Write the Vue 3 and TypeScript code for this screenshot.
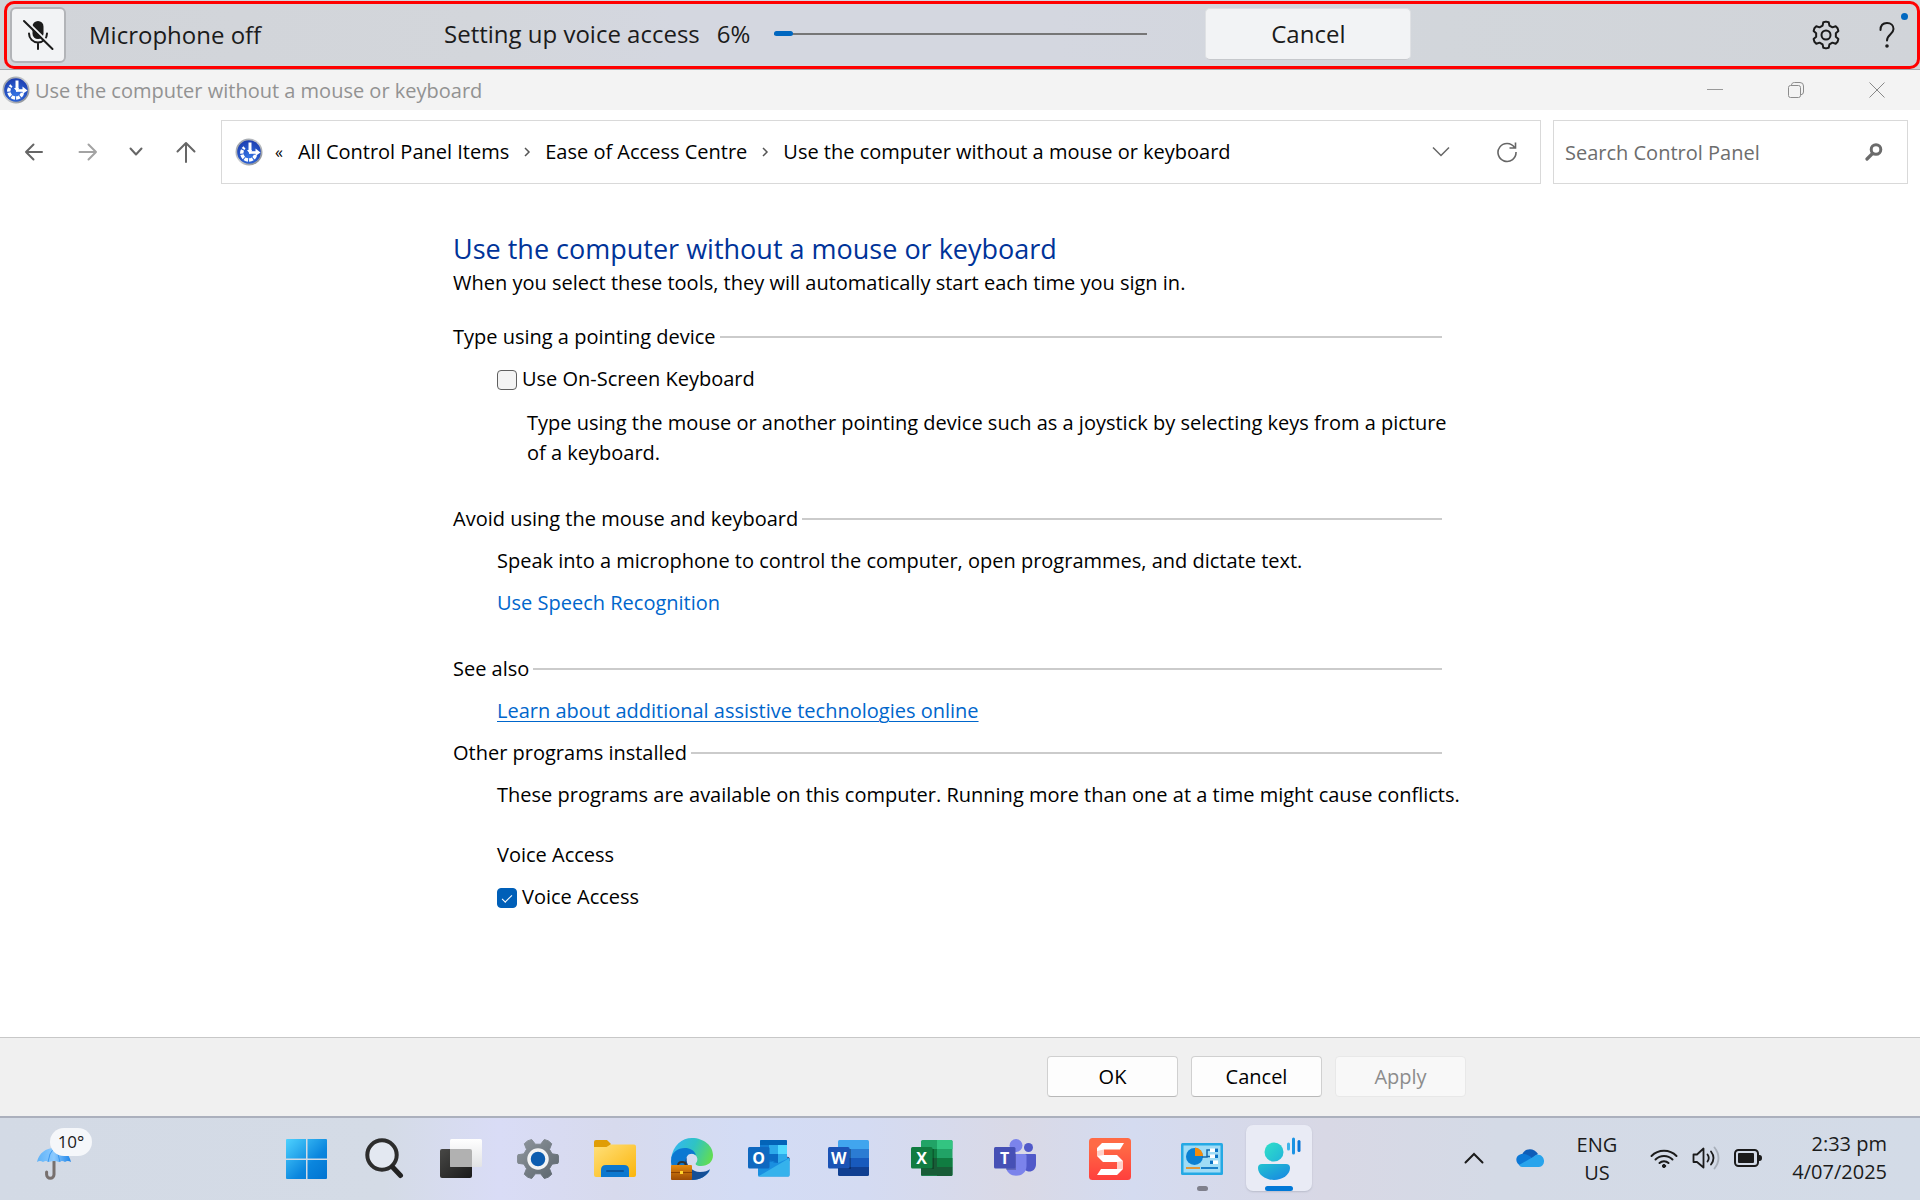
<script setup lang="ts">
import { ref } from 'vue'

const progress = ref<number>(6)
const onScreenKeyboard = ref<boolean>(false)
const voiceAccess = ref<boolean>(true)
const search = ref<string>('')

const crumbs: string[] = [
  'All Control Panel Items',
  'Ease of Access Centre',
  'Use the computer without a mouse or keyboard',
]

// Outline of a cog centred on (c, c); turn is the angle of the first tooth in degrees.
function cog(c: number, outer: number, inner: number, turn: number, half: number): string {
  const points: string[] = []
  for (let i = 0; i < 6; i++) {
    const steps: [number, number][] = [
      [-half - 8, inner],
      [-half, outer],
      [0, outer + 0.4],
      [half, outer],
      [half + 8, inner],
    ]
    for (const [offset, radius] of steps) {
      const a = ((turn + i * 60 + offset) * Math.PI) / 180
      points.push(`${(c + radius * Math.cos(a)).toFixed(2)} ${(c + radius * Math.sin(a)).toFixed(2)}`)
    }
  }
  return `M${points.join('L')}Z`
}

const outlineCog = cog(15, 13, 10, 30, 12)
const solidCog = cog(21, 20.5, 15, 0, 12)
</script>

<template>
  <div class="desktop">
    <header class="voice-bar">
      <div class="voice-frame">
        <div class="mic">
          <button class="mic-button" type="button" aria-label="Turn microphone on">
            <svg width="32" height="32" viewBox="0 0 32 32" fill="none">
              <rect x="10.500" y="2" width="11" height="18" rx="5.500" fill="#1b1b1b" />
              <path d="M7 14.500a9 9 0 0 0 18 0M16 24v6" stroke="#1b1b1b" stroke-width="2" stroke-linecap="round" />
              <path d="M3.500 1L32 29" stroke="#f2f3f5" stroke-width="2" />
              <path d="M2 2l28.500 28" stroke="#1b1b1b" stroke-width="2" stroke-linecap="round" />
            </svg>
          </button>
          <span>Microphone off</span>
        </div>
        <div class="setup">
          <span>Setting up voice access</span>
          <span>{{ progress }}%</span>
          <div class="track" role="progressbar" :aria-valuenow="progress" aria-valuemin="0" aria-valuemax="100">
            <div class="fill" :style="{ width: progress - 1 + '%' }"></div>
          </div>
          <button class="voice-cancel" type="button">Cancel</button>
        </div>
        <div class="voice-tools">
          <button class="bare" type="button" aria-label="Settings">
            <svg width="30" height="30" viewBox="0 0 30 30" fill="none" stroke="#1b1b1b" stroke-width="2" stroke-linejoin="round">
              <path :d="outlineCog" />
              <circle cx="15" cy="15" r="4.500" />
            </svg>
          </button>
          <button class="bare help" type="button" aria-label="Help">
            <svg width="18" height="28" viewBox="0 0 18 28" fill="none" stroke="#1b1b1b" stroke-width="2" stroke-linecap="round">
              <path d="M2.500 9C2.500 4.500 5 2 9 2s6.500 2.500 6.500 6c0 5-6.500 5.500-6.500 11.500" />
              <circle cx="9" cy="25" r="0.800" fill="#1b1b1b" />
            </svg>
            <span class="dot"></span>
          </button>
        </div>
      </div>
    </header>

    <svg class="defs" width="0" height="0" aria-hidden="true">
      <defs>
        <linearGradient id="rim" x1="0" y1="0" x2="1" y2="1">
          <stop offset="0" stop-color="#8d9299" /><stop offset="0.500" stop-color="#c9ccd0" /><stop offset="1" stop-color="#777c84" />
        </linearGradient>
        <radialGradient id="orb" cx="0.500" cy="0.700" r="0.700">
          <stop offset="0" stop-color="#3474e4" /><stop offset="1" stop-color="#1c3db0" />
        </radialGradient>
        <symbol id="ease" viewBox="0 0 28 28">
          <circle cx="14" cy="14" r="13.500" fill="url(#rim)" />
          <circle cx="14" cy="14" r="11.800" fill="url(#orb)" />
          <path d="M20.500 17a7 7 0 1 1-11-7.500" fill="none" stroke="#fff" stroke-width="3.400" stroke-dasharray="3.800 1" />
          <path d="M15 4.500v9" fill="none" stroke="#fff" stroke-width="3" />
          <path d="M14 14.500h8" fill="none" stroke="#fff" stroke-width="2.600" />
          <path d="M20.500 10.500l5 4-5 3.500zM12 12h5l-2 4z" fill="#fff" />
        </symbol>
      </defs>
    </svg>

    <div class="title-bar">
      <svg width="28" height="28"><use href="#ease" /></svg>
      <span class="title">Use the computer without a mouse or keyboard</span>
      <div class="window-buttons">
        <button class="bare" type="button" aria-label="Minimise">
          <svg width="16" height="16" viewBox="0 0 16 16" stroke="#999"><path d="M0 7.500h16" /></svg>
        </button>
        <button class="bare" type="button" aria-label="Restore">
          <svg width="16" height="16" viewBox="0 0 16 16" fill="none" stroke="#8c8c8c">
            <rect x="0.500" y="3.500" width="12" height="12" rx="2" /><path d="M3.500 3.500C3.500 1.500 4.500 0.500 6.500 0.500H12q3.500 0 3.500 3.500v6q0 2.500-3 3" />
          </svg>
        </button>
        <button class="bare" type="button" aria-label="Close">
          <svg width="16" height="16" viewBox="0 0 16 16" stroke="#888"><path d="M0.500 0.500l15 15M15.500 0.500l-15 15" /></svg>
        </button>
      </div>
    </div>

    <div class="nav-bar">
      <div class="nav-arrows">
        <button class="bare" type="button" aria-label="Back">
          <svg width="20" height="20" viewBox="0 0 20 20" fill="none" stroke="#666" stroke-width="2" stroke-linecap="round" stroke-linejoin="round"><path d="M18 10H2M9.500 2.500L2 10l7.500 7.500" /></svg>
        </button>
        <button class="bare" type="button" aria-label="Forward">
          <svg width="20" height="20" viewBox="0 0 20 20" fill="none" stroke="#a3a3a3" stroke-width="2" stroke-linecap="round" stroke-linejoin="round"><path d="M1.500 10H18M10.500 2.500L18 10l-7.500 7.500" /></svg>
        </button>
        <button class="bare recent" type="button" aria-label="Recent locations">
          <svg width="14" height="10" viewBox="0 0 14 10" fill="none" stroke="#666" stroke-width="2" stroke-linecap="round" stroke-linejoin="round"><path d="M1.500 1.500L7 7.500l5.500-6" /></svg>
        </button>
        <button class="bare" type="button" aria-label="Up">
          <svg width="20" height="22" viewBox="0 0 20 22" fill="none" stroke="#666" stroke-width="2" stroke-linecap="round" stroke-linejoin="round"><path d="M10 21V2M1.500 10.500L10 2l8.500 8.500" /></svg>
        </button>
      </div>
      <div class="address">
        <svg width="28" height="28"><use href="#ease" /></svg>
        <span class="overflow">«</span>
        <nav class="crumbs" aria-label="Location">
          <template v-for="(crumb, i) in crumbs" :key="crumb">
            <svg v-if="i > 0" width="8" height="10" viewBox="0 0 8 10" fill="none" stroke="#555" stroke-width="1.500"><path d="M2 1l4 4-4 4" /></svg>
            <a href="#">{{ crumb }}</a>
          </template>
        </nav>
        <button class="bare" type="button" aria-label="Previous locations">
          <svg width="18" height="12" viewBox="0 0 18 12" fill="none" stroke="#666" stroke-width="1.500"><path d="M1 1.500l8 8 8-8" /></svg>
        </button>
        <button class="bare refresh" type="button" aria-label="Refresh">
          <svg width="22" height="22" viewBox="0 0 22 22" fill="none" stroke="#666" stroke-width="1.600"><path d="M18.500 6.500A9 9 0 1 0 20 11M19.500 1.500v5.500h-6" /></svg>
        </button>
      </div>
      <label class="search">
        <input v-model="search" type="text" placeholder="Search Control Panel" aria-label="Search Control Panel" />
        <svg width="18" height="18" viewBox="0 0 18 18" fill="none" stroke="#6b6b6b"><circle cx="11" cy="6.500" r="4.800" stroke-width="3" /><path d="M7.500 10.500L2 16" stroke-width="3.200" stroke-linecap="round" /></svg>
      </label>
    </div>

    <main class="page">
      <div class="column">
        <h1>Use the computer without a mouse or keyboard</h1>
        <p class="intro">When you select these tools, they will automatically start each time you sign in.</p>

        <section>
          <h2>Type using a pointing device</h2>
          <label class="check"><input v-model="onScreenKeyboard" type="checkbox" />Use On-Screen Keyboard</label>
          <p class="hint">Type using the mouse or another pointing device such as a joystick by selecting keys from a picture of a keyboard.</p>
        </section>

        <section>
          <h2>Avoid using the mouse and keyboard</h2>
          <p>Speak into a microphone to control the computer, open programmes, and dictate text.</p>
          <p><a class="link" href="#">Use Speech Recognition</a></p>
        </section>

        <section class="tight">
          <h2>See also</h2>
          <p><a class="link underlined" href="#">Learn about additional assistive technologies online</a></p>
        </section>

        <section>
          <h2>Other programs installed</h2>
          <p>These programs are available on this computer. Running more than one at a time might cause conflicts.</p>
          <p class="program">Voice Access</p>
          <label class="check"><input v-model="voiceAccess" type="checkbox" />Voice Access</label>
        </section>
      </div>
    </main>

    <div class="actions">
      <div class="column">
        <button type="button">OK</button>
        <button type="button">Cancel</button>
        <button type="button" disabled>Apply</button>
      </div>
    </div>

    <footer class="taskbar">
      <button class="bare weather" type="button" aria-label="Weather, 10 degrees">
        <svg width="36" height="32" viewBox="0 0 36 32" fill="none">
          <defs>
            <linearGradient id="umb" x1="0" x2="1"><stop offset="0" stop-color="#5eb2f7" /><stop offset="0.500" stop-color="#8ccaff" /><stop offset="1" stop-color="#1c84e8" /></linearGradient>
          </defs>
          <path d="M18 11v15.500a3.700 3.700 0 0 1-7.400 0V24" stroke="#77706e" stroke-width="3" stroke-linecap="round" />
          <path d="M1 14C3 5 10 0 18 0s15 5 17 14q-3.500-2-6 0-3-2-6 0-5-2-10 0-3-2-6 0-3-2-6 0z" fill="url(#umb)" />
          <path d="M12 14Q13 5 18 0q5 5 6 14" stroke="#3b97ee" />
        </svg>
        <span class="temp">10°</span>
      </button>

      <nav class="apps" aria-label="Taskbar apps">
        <button class="bare slot" type="button" aria-label="Start">
          <svg width="42" height="42" viewBox="0 0 42 42">
            <defs><linearGradient id="win" gradientUnits="userSpaceOnUse" x1="0" y1="0" x2="42" y2="42"><stop offset="0" stop-color="#4fd3ff" /><stop offset="0.600" stop-color="#0a86de" /><stop offset="1" stop-color="#0072d0" /></linearGradient></defs>
            <path d="M1 1h19v19.500H0V2q0-1 1-1zM21.500 1H40q1 0 1 1v18.500H21.500zM0 22h20v19H1q-1 0-1-1zM21.500 22H41v18q0 1-1 1H21.500z" fill="url(#win)" />
          </svg>
        </button>
        <button class="bare slot" type="button" aria-label="Search">
          <svg width="40" height="42" viewBox="0 0 40 42" fill="none"><circle cx="18" cy="17" r="14.700" fill="#e3e8f1" stroke="#2d2d2d" stroke-width="4" /><path d="M28.500 29l8 8.500" stroke="#222" stroke-width="5" stroke-linecap="round" /></svg>
        </button>
        <button class="bare slot" type="button" aria-label="Task view">
          <svg width="42" height="42" viewBox="0 0 42 42">
            <defs><linearGradient id="tvd" x1="0" y1="0" x2="1" y2="1"><stop offset="0" stop-color="#484846" /><stop offset="1" stop-color="#1a1a1a" /></linearGradient><linearGradient id="tvl" x1="0" y1="0" x2="0" y2="1"><stop offset="0" stop-color="#fff" /><stop offset="1" stop-color="#e2e3e5" /></linearGradient></defs>
            <rect x="0" y="11" width="32" height="29" rx="2" fill="url(#tvd)" />
            <rect x="10" y="1" width="32" height="28" rx="1.500" fill="url(#tvl)" />
            <path d="M10 11h20q2 0 2 2v16H11.500q-1.500 0-1.500-1.500z" fill="#b1b1b1" />
          </svg>
        </button>
        <button class="bare slot" type="button" aria-label="Settings">
          <svg width="42" height="42" viewBox="0 0 42 42">
            <defs><linearGradient id="cogfill" x1="0" y1="0" x2="1" y2="1"><stop offset="0" stop-color="#90979e" /><stop offset="1" stop-color="#5a646c" /></linearGradient></defs>
            <path :d="solidCog" fill="url(#cogfill)" stroke="url(#cogfill)" stroke-linejoin="round" />
            <circle cx="21" cy="21" r="9" fill="#0c5db0" stroke="#f2f3f4" stroke-width="3.500" />
          </svg>
        </button>
        <button class="bare slot" type="button" aria-label="File Explorer">
          <svg width="42" height="42" viewBox="0 0 42 42">
            <defs><linearGradient id="fold" x1="0" y1="0" x2="1" y2="1"><stop offset="0" stop-color="#ffe07a" /><stop offset="1" stop-color="#fbb50b" /></linearGradient></defs>
            <path d="M0 4q0-2 2-2h11l4 4-3 4H0z" fill="#e09d04" />
            <path d="M0 9h12.500l4-2.500H40q2 0 2 2V37q0 2-2 2H2q-2 0-2-2z" fill="url(#fold)" />
            <path d="M7 39v-7q0-5 5-5h18q5 0 5 5v7z" fill="#0c78cf" />
            <path d="M13 33h16" stroke="#0a559c" stroke-width="2" stroke-linecap="round" />
          </svg>
        </button>
        <button class="bare slot" type="button" aria-label="Microsoft Edge">
          <svg width="44" height="44" viewBox="0 0 44 44">
            <defs>
              <linearGradient id="edge1" x1="0" y1="0.300" x2="1" y2="0.600"><stop offset="0" stop-color="#35b6f2" /><stop offset="0.500" stop-color="#2fc3c4" /><stop offset="1" stop-color="#62dd52" /></linearGradient>
              <linearGradient id="case" x1="0" y1="0" x2="0" y2="1"><stop offset="0" stop-color="#e58a10" /><stop offset="1" stop-color="#9c4b05" /></linearGradient>
            </defs>
            <path d="M1 22C3 8 12 1 22 1c12 0 21 8 21 17 0 7-5 11-12 11-5 0-6-2-5-3 2-2 2-6-1-8C17 13 5 15 1 22z" fill="url(#edge1)" />
            <path d="M1 24C1 15 8 11 15 11c5 0 9 2 11 7-6-3-10 0-10 6 0 8 6 12 14 12 5 0 8-2 10-3-3 6-10 10-18 10C10 43 1 35 1 24z" fill="#0b78d2" />
            <path d="M17 20c-2 8 5 15 13 15 5 0 8-1 10-3-3 7-10 11-18 11-9-3-10-15-5-23z" fill="#154f96" />
            <path d="M8 29q0-4 4-4t4 4" fill="none" stroke="#333" stroke-width="2" />
            <rect x="1" y="28" width="21" height="15" rx="1" fill="url(#case)" />
            <path d="M1 35.500h21" stroke="#8c4000" /><rect x="10" y="34" width="3" height="3" fill="#ffd52e" />
          </svg>
        </button>
        <button class="bare slot" type="button" aria-label="Outlook">
          <svg width="42" height="42" viewBox="0 0 42 42">
            <rect x="12" y="2" width="27" height="24" rx="1.500" fill="#0f7bd4" /><path d="M12 7V3q0-1 1-1h25q1 0 1 1v4z" fill="#0364b8" />
            <path d="M39.500 18.500l2 1.500v3l-3 1z" fill="#0a2767" />
            <path d="M10 20h31.500v17q0 1.500-1.500 1.500H12q-2 0-2-1.500z" fill="#1a8fe0" /><path d="M12 7h9v13l5 5h4l9-5V16h-9v8H21" fill="#117bd2" />
            <path d="M21 16h9v9l-9-3z" fill="#0b6cc4" /><path d="M30 16h9v5l-9 4zM21 7h9v9h-9z" fill="#2caaea" /><path d="M30 7h9v9h-9z" fill="#50d9ff" />
            <path d="M41.500 20L10 38.500h30q1.500 0 1.500-1.500z" fill="#35b2ec" />
            <rect x="0" y="9" width="21.500" height="21.500" rx="1.500" fill="#0f68c0" /><text x="10.700" y="25.500" class="glyph">O</text>
          </svg>
        </button>
        <button class="bare slot office" type="button" aria-label="Word">
          <svg width="42" height="42" viewBox="0 0 42 42">
            <path d="M10 11V3.500Q10 2 11.500 2h28Q41 2 41 3.500V11z" fill="#41a5ee" /><path d="M10 11h31v9H10z" fill="#2b7cd3" /><path d="M10 20h31v9H10z" fill="#185abd" /><path d="M10 29h31v7.500q0 1.500-1.500 1.500h-28Q10 38 10 36.500z" fill="#103f91" />
            <path d="M21 11h2v20H10v-2h11z" opacity="0.250" /><rect x="0" y="9" width="21.500" height="21.500" rx="1.500" fill="#1b53b5" /><text x="10.700" y="25.500" class="glyph">W</text>
          </svg>
        </button>
        <button class="bare slot office" type="button" aria-label="Excel">
          <svg width="42" height="42" viewBox="0 0 42 42">
            <rect x="10" y="2" width="31.500" height="36" rx="1.500" fill="#21a366" /><path d="M26 2h14q1.500 0 1.500 1.500V11H26z" fill="#33c481" /><path d="M10 20h16v-9h-6v9zM26 20h15.500v9H26z" fill="#107c41" /><path d="M10 20h16v17.500H11.500Q10 38 10 36.500zM26 29h15.500v7.500q0 1.500-1.500 1.500H26z" fill="#185c37" />
            <path d="M21 11h2v20H10v-2h11z" opacity="0.250" /><rect x="0" y="9" width="21.500" height="21.500" rx="1.500" fill="#107c41" /><text x="10.700" y="25.500" class="glyph">X</text>
          </svg>
        </button>
        <button class="bare slot office" type="button" aria-label="Teams">
          <svg width="42" height="42" viewBox="0 0 42 42">
            <circle cx="34.500" cy="9.500" r="4.500" fill="#5059c9" /><path d="M28 16h13q1 0 1 1v9c0 10-13 10-14 0z" fill="#5059c9" /><circle cx="22" cy="7.500" r="6.500" fill="#7b83eb" /><path d="M12 16h19q1.500 0 1.500 1.500V28c0 13-20.500 13-20.500 0z" fill="#7b83eb" />
            <path d="M12 16h10v16H12z" opacity="0.200" /><rect x="0" y="9" width="21.500" height="21.500" rx="1.500" fill="#4650b5" /><text x="10.700" y="25.500" class="glyph">T</text>
          </svg>
        </button>
        <button class="bare slot snag" type="button" aria-label="Snagit">
          <svg width="42" height="42" viewBox="0 0 42 42">
            <defs><linearGradient id="sna" x1="0" y1="0" x2="0" y2="1"><stop offset="0.200" stop-color="#ff6a45" /><stop offset="1" stop-color="#ff3f3d" /></linearGradient></defs>
            <rect width="42" height="42" rx="3.500" fill="url(#sna)" />
            <path d="M13 5h22l-4 6.500H15V17h13l6 6v8l-6 6H8l4-6h16v-7H14l-6-6v-8z" fill="#fff" /><path d="M8 13l7-1.500V17l-7 1zM28 24l6-1v8h-6z" fill="#ffd0c8" />
          </svg>
        </button>
        <button class="bare slot" type="button" aria-label="Control Panel">
          <svg width="42" height="34" viewBox="0 0 42 34">
            <rect x="0" y="1" width="42" height="32" rx="1.500" fill="#25a9e4" /><rect x="2.500" y="3.500" width="37" height="27" fill="#9fdcf6" />
            <circle cx="13.500" cy="14.500" r="8.500" fill="#0b80d3" /><path d="M14 14V5.500a8.500 8.500 0 0 1 8 8.500z" fill="#f58b0a" />
            <path d="M21 15h5V8h4M26 14.500h4" fill="none" stroke="#1468ac" stroke-width="1.500" />
            <path d="M29 6.500h8v3.500h-8zM29 12.500h8V16h-8zM29 18.500h8V22h-8z" fill="#fff" /><path d="M34 6.500h3v3.500h-3zM34 12.500h3V16h-3zM29 18.500h3V22h-3z" fill="#0b73c4" />
            <path d="M5 26h14" stroke="#e0983a" stroke-width="2" /><path d="M20 26h17" stroke="#1b80c8" stroke-width="2" />
          </svg>
          <span class="running"></span>
        </button>
        <button class="bare slot active" type="button" aria-label="Voice access">
          <svg width="44" height="44" viewBox="0 0 44 44">
            <defs><linearGradient id="va1" x1="0" y1="0" x2="1" y2="1"><stop offset="0" stop-color="#30e0c8" /><stop offset="1" stop-color="#20b4da" /></linearGradient><linearGradient id="va2" x1="0" y1="0" x2="1" y2="1"><stop offset="0" stop-color="#22c3d0" /><stop offset="1" stop-color="#1784e3" /></linearGradient></defs>
            <circle cx="17" cy="16" r="9.500" fill="url(#va1)" /><path d="M5 28h24q4 0 4 4c0 7-8 12-16 12S1 39 1 32q0-4 4-4z" fill="url(#va2)" />
            <path d="M31.500 8v5" stroke="#3fb3ea" stroke-width="3" stroke-linecap="round" /><path d="M36.500 3v14" stroke="#1a93e4" stroke-width="3" stroke-linecap="round" /><path d="M42 5.500v9" stroke="#0b76d6" stroke-width="3" stroke-linecap="round" />
          </svg>
          <span class="running current"></span>
        </button>
      </nav>

      <div class="tray">
        <button class="bare" type="button" aria-label="Show hidden icons">
          <svg width="20" height="12" viewBox="0 0 20 12" fill="none" stroke="#1b1b1b" stroke-width="2" stroke-linecap="round"><path d="M1.500 10.500L10 2l8.500 8.500" /></svg>
        </button>
        <button class="bare cloud" type="button" aria-label="OneDrive">
          <svg width="28" height="20" viewBox="0 0 28 20"><path d="M6 7C8 0 18-1 22 6l-8 6z" fill="#0f5db8" /><path d="M5 18C-2 15-1 6 7 6c3 0 5 1 8 3l4 9z" fill="#0d78d6" /><path d="M3 17L17 9q2-2 4-2.500c9 0 9 12 2 12.500H6q-2 0-3-2z" fill="#28a4ec" /></svg>
        </button>
        <button class="bare lang" type="button"><span>ENG</span><span>US</span></button>
        <button class="bare status" type="button" aria-label="Network, volume and battery">
          <svg width="28" height="22" viewBox="0 0 28 22" fill="none" stroke="#1b1b1b" stroke-width="2" stroke-linecap="round"><path d="M1.500 9a17.500 17.500 0 0 1 25 0M5.500 12.500a12 12 0 0 1 17 0M9.500 16a6.500 6.500 0 0 1 9 0" /><circle cx="14" cy="19" r="1.600" fill="#1b1b1b" stroke-width="1" /></svg>
          <svg width="28" height="24" viewBox="0 0 28 24" fill="none" stroke="#1b1b1b" stroke-width="1.800" stroke-linecap="round" stroke-linejoin="round"><path d="M1.500 8.500H5L11.500 2.500v19L5 16H1.500zM15.500 8.500q2.500 3.500 0 7M19 5.500q5 6.500 0 13" /><path d="M22.500 1.500q8 10.500 0 21" stroke="#a8afb9" /></svg>
          <svg width="28" height="20" viewBox="0 0 28 20" fill="none"><rect x="1" y="2" width="23" height="16" rx="3.500" stroke="#1b1b1b" stroke-width="2" /><rect x="4" y="5" width="16" height="10" rx="1" fill="#1b1b1b" /><path d="M24 7h1.500q2.500 0 2.500 3t-2.500 3H24z" fill="#1b1b1b" /></svg>
        </button>
        <button class="bare clock" type="button"><span>2:33 pm</span><span>4/07/2025</span></button>
      </div>
    </footer>
  </div>
</template>

<style>
body {
  background: #fff;
}
</style>

<style scoped>
.desktop {
  display: flex;
  flex-direction: column;
  min-height: 100vh;
  font-family: "Open Sans", "Noto Sans", sans-serif;
  font-size: 20px;
  line-height: 30px;
  color: #000;
}
button,
input {
  font: inherit;
  color: inherit;
}
svg {
  display: block;
  flex: none;
}
a {
  color: inherit;
  text-decoration: none;
}
h1,
h2,
p {
  margin: 0;
  font-weight: 400;
}
.defs {
  position: absolute;
}
.bare {
  display: flex;
  align-items: center;
  justify-content: center;
  padding: 0;
  border: 0;
  background: none;
}

.voice-bar {
  box-sizing: border-box;
  height: 70px;
  padding: 1px 0 0 4px;
  border-bottom: 1px solid #a9abb0;
  background: linear-gradient(90deg, #d1d4d9, #d3d6db 25%, #d4d7e0 35%, #d4d7e0 55%, #d2d6db 75%, #d1d4d9);
}
.voice-frame {
  box-sizing: border-box;
  display: flex;
  align-items: center;
  height: 68px;
  padding: 0 3px;
  border: 3px solid #f00;
  border-radius: 10px;
  font-size: 24px;
  color: #1b1b1b;
}
.mic {
  display: flex;
  flex: 0 0 434px;
  align-items: center;
  gap: 23px;
}
.mic-button {
  box-sizing: border-box;
  display: flex;
  align-items: center;
  justify-content: center;
  width: 56px;
  height: 56px;
  padding: 0;
  border: 2px solid #b2b4b8;
  border-radius: 6px;
  background: #f2f3f5;
}
.setup {
  display: flex;
  align-items: center;
  gap: 17px;
  padding-bottom: 2px;
}
.track {
  width: 373px;
  height: 2px;
  margin-left: 7px;
  background: #767676;
}
.fill {
  height: 5px;
  margin-top: -2px;
  border-radius: 3px;
  background: #0067c0;
}
.voice-cancel {
  width: 206px;
  height: 52px;
  margin-left: 41px;
  padding: 0;
  border: 1px solid #dfe1e4;
  border-bottom-color: #c6c8cc;
  border-radius: 5px;
  background: #f2f3f5;
}
.voice-tools {
  display: flex;
  flex: 1;
  justify-content: flex-end;
  align-self: stretch;
}
.voice-tools .bare {
  position: relative;
  width: 68px;
}
.voice-tools .help {
  width: 54px;
}
.dot {
  position: absolute;
  top: 9px;
  right: 6px;
  width: 7px;
  height: 7px;
  border-radius: 50%;
  background: #0067c0;
}

.title-bar {
  display: flex;
  align-items: center;
  gap: 5px;
  height: 40px;
  padding: 0 3px 0 2px;
  background: #f3f3f3;
}
.title {
  flex: 1;
  padding-top: 2px;
  color: #929292;
}
.window-buttons {
  display: flex;
  align-self: stretch;
}
.window-buttons .bare {
  width: 81px;
}

.nav-bar {
  display: flex;
  gap: 12px;
  padding: 10px 12px 0 24px;
}
.nav-arrows {
  display: flex;
  align-items: center;
  gap: 34px;
  width: 185px;
}
.recent {
  margin: 0 -1px 0 -3px;
}
.address,
.search {
  box-sizing: border-box;
  display: flex;
  align-items: center;
  height: 64px;
  border: 1px solid #d9d9d9;
}
.address {
  flex: 1;
  padding: 0 22px 0 13px;
}
.overflow {
  margin: 0 15px 0 12px;
  font-size: 16px;
}
.crumbs {
  display: flex;
  flex: 1;
  align-items: center;
  gap: 14px;
}
.refresh {
  margin-left: 46px;
}
.search {
  width: 355px;
  padding: 0 24px 0 11px;
}
.search input {
  flex: 1;
  min-width: 0;
  padding: 2px 0 0;
  border: 0;
  outline: 0;
  background: none;
}
.search input::placeholder {
  color: #6d6d6d;
  opacity: 1;
}

.page {
  flex: 1;
  padding: 46px 0 40px;
}
.column {
  box-sizing: border-box;
  max-width: 1014px;
  margin: 0 auto;
}
h1 {
  font-size: 27px;
  line-height: 38px;
  color: #003399;
}
.intro {
  margin: 0 0 24px;
}
section {
  display: flex;
  flex-direction: column;
  align-items: flex-start;
  gap: 12px;
  margin-bottom: 36px;
  padding-left: 44px;
}
section.tight {
  margin-bottom: 12px;
}
h2 {
  display: flex;
  align-items: center;
  align-self: stretch;
  gap: 4px;
  margin: 0 25px 0 -44px;
  font-size: 20px;
}
h2::after {
  content: "";
  flex: 1;
  height: 2px;
  background: #cbcbcb;
}
.check {
  display: flex;
  align-items: center;
  gap: 5px;
}
.check input {
  appearance: none;
  box-sizing: border-box;
  width: 20px;
  height: 20px;
  margin: 2px 0 0;
  border: 1px solid #5f5f5f;
  border-radius: 4px;
  background: #f3f3f3;
}
.check input:checked {
  display: grid;
  place-items: center;
  border-color: #005fb8;
  background: #005fb8;
}
.check input:checked::after {
  content: "";
  box-sizing: border-box;
  width: 10px;
  height: 5px;
  margin-top: -2px;
  border: solid #fff;
  border-width: 0 0 1px 1px;
  transform: rotate(-45deg);
}
.hint {
  margin: 2px 16px 0 30px;
}
.program {
  margin-top: 18px;
}
.link {
  color: #0066cc;
}
.underlined {
  text-decoration: underline;
  text-decoration-thickness: 1px;
  text-underline-offset: 3px;
}

.actions {
  padding: 18px 0 19px;
  border-top: 1px solid #c8c8c8;
  background: #f0f0f0;
}
.actions .column {
  display: flex;
  justify-content: flex-end;
  gap: 13px;
  padding-right: 1px;
}
.actions button {
  width: 131px;
  height: 41px;
  padding: 0;
  border: 1px solid #d0d0d0;
  border-bottom-color: #b8b8b8;
  border-radius: 4px;
  background: #fdfdfd;
}
.actions button:disabled {
  border-color: #e8e8e8;
  background: #f8f8f8;
  color: #8c8c8c;
}

.taskbar {
  box-sizing: border-box;
  display: flex;
  align-items: stretch;
  height: 84px;
  border-top: 2px solid #abb0bd;
  background: linear-gradient(90deg, #d3dae5, #d4dbe6 20%, #d9dcf6 26%, #d7daed 32%, #d3dcf5 39%, #d4dbf2 45%, #d9d9e6 53%, #d4dbf0 59%, #d8d8e5 69%, #d4dae6 78%, #d3dbe7);
  color: #1b1b1b;
}
.weather {
  position: relative;
  align-items: flex-end;
  justify-content: flex-start;
  width: 268px;
  padding: 0 0 20px 36px;
}
.temp {
  position: absolute;
  top: 10px;
  left: 50px;
  width: 42px;
  border-radius: 14px;
  background: #f5f7fa;
  font-size: 17px;
  line-height: 28px;
}
.apps {
  display: flex;
}
.slot {
  position: relative;
  width: 77px;
}
.slot.office {
  width: 83px;
}
.slot.snag {
  width: 107px;
}
.glyph {
  font-family: "Open Sans", sans-serif;
  font-size: 16px;
  font-weight: 700;
  text-anchor: middle;
  fill: #fff;
}
.slot.active {
  width: 66px;
  height: 66px;
  margin: 7px 0 0 6px;
  border-radius: 7px;
  background: #e9ebf5;
  box-shadow: 0 1px 2px #b9bccb;
}
.running {
  position: absolute;
  bottom: 9px;
  left: 50%;
  width: 11px;
  height: 5px;
  margin-left: -5px;
  border-radius: 3px;
  background: #7f808c;
}
.running.current {
  bottom: 0;
  width: 28px;
  margin-left: -14px;
  background: #0078d7;
}
.tray {
  display: flex;
  flex: 1;
  align-items: center;
  justify-content: flex-end;
  padding: 0 33px 2px 0;
}
.cloud {
  margin-left: 32px;
}
.lang,
.clock {
  flex-direction: column;
  line-height: 28px;
}
.lang {
  margin: 2px 33px 0;
}
.status {
  gap: 14px;
}
.clock {
  align-items: flex-end;
  margin-left: 30px;
}
</style>
